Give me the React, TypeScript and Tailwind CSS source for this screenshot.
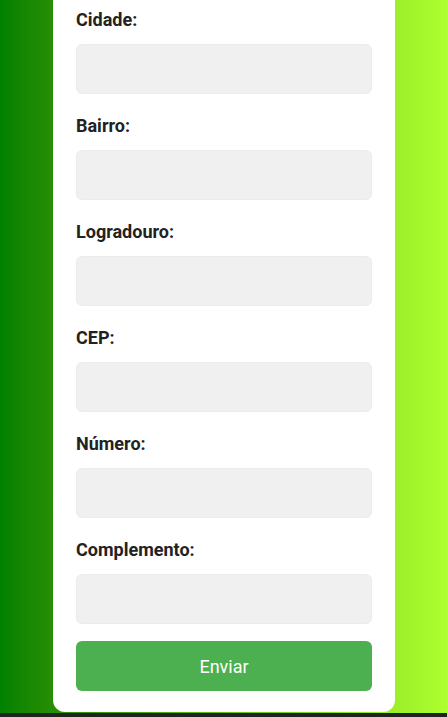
const FIELDS = ['Cidade:', 'Bairro:', 'Logradouro:', 'CEP:', 'Número:', 'Complemento:'];

export default function App() {
  return (
    <div className="h-[717px] overflow-hidden bg-[#222] font-['Roboto',sans-serif]">
      <div className="h-[713px] bg-gradient-to-r from-[#008000] to-[#adff2f] pl-[53px]">
        <form
          onSubmit={e => e.preventDefault()}
          className="w-[342px] bg-white rounded-b-xl px-[23px] pt-[9px] pb-[21px]"
        >
          <div className="flex flex-col gap-[21px]">
            {FIELDS.map(f => (
              <div key={f}>
                <label className="block text-[18px] font-bold leading-[21px] text-[#222] mb-[14px]">{f}</label>
                <input
                  type="text"
                  className="block w-full h-[50px] rounded-md bg-[#f0f0f0] border border-[#ececec] outline-none"
                />
              </div>
            ))}
          </div>
          <button
            type="submit"
            className="mt-[17px] w-full h-[50px] rounded-md bg-[#4caf50] text-white text-[18px]"
          >
            Enviar
          </button>
        </form>
      </div>
    </div>
  );
}
